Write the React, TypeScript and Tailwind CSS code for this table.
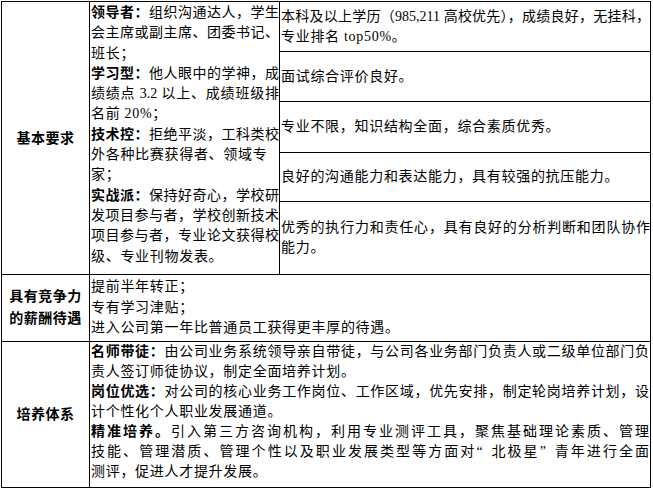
import type { ReactNode } from "react";

type Line = { b?: string; t: ReactNode; j?: boolean };

const requirementLines: Line[] = [
  { b: "领导者：", t: "组织沟通达人，学生", j: true },
  { t: "会主席或副主席、团委书记、", j: true },
  { t: "班长；" },
  { b: "学习型：", t: "他人眼中的学神，成", j: true },
  { t: "绩绩点 3.2 以上、成绩班级排", j: true },
  { t: "名前 20%；" },
  { b: "技术控：", t: "拒绝平淡，工科类校", j: true },
  { t: "外各种比赛获得者、领域专" },
  { t: "家；" },
  { b: "实战派：", t: "保持好奇心，学校研", j: true },
  { t: "发项目参与者，学校创新技术", j: true },
  { t: "项目参与者，专业论文获得校", j: true },
  { t: "级、专业刊物发表。" },
];

const trainingLines: Line[] = [
  { b: "名师带徒：", t: "由公司业务系统领导亲自带徒，与公司各业务部门负责人或二级单位部门负", j: true },
  { t: "责人签订师徒协议，制定全面培养计划。" },
  { b: "岗位优选：", t: "对公司的核心业务工作岗位、工作区域，优先安排，制定轮岗培养计划，设", j: true },
  { t: "计个性化个人职业发展通道。" },
  { b: "精准培养。", t: "引入第三方咨询机构，利用专业测评工具，聚焦基础理论素质、管理", j: true },
  {
    t: (
      <>
        技能、管理潜质、管理个性以及职业发展类型等方面对
        <span className="inline-block w-[13px] text-right">“</span>北极星
        <span className="inline-block w-[13px] text-left">”</span>青年进行全面
      </>
    ),
    j: true,
  },
  { t: "测评，促进人才提升发展。" },
];

function TextLine({ line }: { line: Line }) {
  return (
    <div
      className={
        line.j
          ? "whitespace-nowrap text-justify [text-align-last:justify]"
          : "whitespace-nowrap tracking-[0.7px]"
      }
    >
      {line.b ? <span className="font-bold">{line.b}</span> : null}
      {line.t}
    </div>
  );
}

function SubCell({ height, last, children }: { height: string; last?: boolean; children: ReactNode }) {
  return (
    <div className={`flex ${height} items-center pl-px ${last ? "" : "border-b border-black"}`}>
      <div className="w-full">{children}</div>
    </div>
  );
}

export default function App() {
  return (
    <div className="min-h-[490px] bg-white pl-px pt-px font-['Liberation_Serif','Noto_Sans_CJK_SC',serif] text-[14px] text-black">
      <div className="w-[650px] border border-black">
        {/* 基本要求 */}
        <div className="flex border-b border-black">
          <div className="flex w-[88px] shrink-0 items-center justify-center border-r border-black font-bold tracking-[0.5px]">
            基本要求
          </div>
          <div className="w-[190px] shrink-0 border-r border-black pl-px pt-px leading-[20.3px]">
            {requirementLines.map((line, i) => (
              <TextLine key={i} line={line} />
            ))}
          </div>
          <div className="flex min-w-0 flex-1 flex-col leading-[20px]">
            <SubCell height="h-[50px]">
              <TextLine line={{ t: "本科及以上学历（985,211 高校优先），成绩良好，无挂科，", j: true }} />
              <TextLine line={{ t: "专业排名 top50%。" }} />
            </SubCell>
            <SubCell height="h-[50px]">
              <TextLine line={{ t: "面试综合评价良好。" }} />
            </SubCell>
            <SubCell height="h-[51px]">
              <TextLine line={{ t: "专业不限，知识结构全面，综合素质优秀。" }} />
            </SubCell>
            <SubCell height="h-[49px]">
              <TextLine line={{ t: "良好的沟通能力和表达能力，具有较强的抗压能力。" }} />
            </SubCell>
            <SubCell height="h-[72px]" last>
              <TextLine line={{ t: "优秀的执行力和责任心，具有良好的分析判断和团队协作", j: true }} />
              <TextLine line={{ t: "能力。" }} />
            </SubCell>
          </div>
        </div>

        {/* 薪酬待遇 */}
        <div className="flex h-[67px] border-b border-black">
          <div className="flex w-[88px] shrink-0 flex-col items-center justify-center border-r border-black font-bold leading-[22px] tracking-[0.5px]">
            <div>具有竞争力</div>
            <div>的薪酬待遇</div>
          </div>
          <div className="flex flex-1 flex-col justify-center pl-px leading-[20.8px]">
            <TextLine line={{ t: "提前半年转正；" }} />
            <TextLine line={{ t: "专有学习津贴；" }} />
            <TextLine line={{ t: "进入公司第一年比普通员工获得更丰厚的待遇。" }} />
          </div>
        </div>

        {/* 培养体系 */}
        <div className="flex h-[145px]">
          <div className="flex w-[88px] shrink-0 items-center justify-center border-r border-black font-bold tracking-[0.5px]">
            培养体系
          </div>
          <div className="min-w-0 flex-1 pl-px pr-px leading-[20px]">
            {trainingLines.map((line, i) => (
              <TextLine key={i} line={line} />
            ))}
          </div>
        </div>
      </div>
    </div>
  );
}
